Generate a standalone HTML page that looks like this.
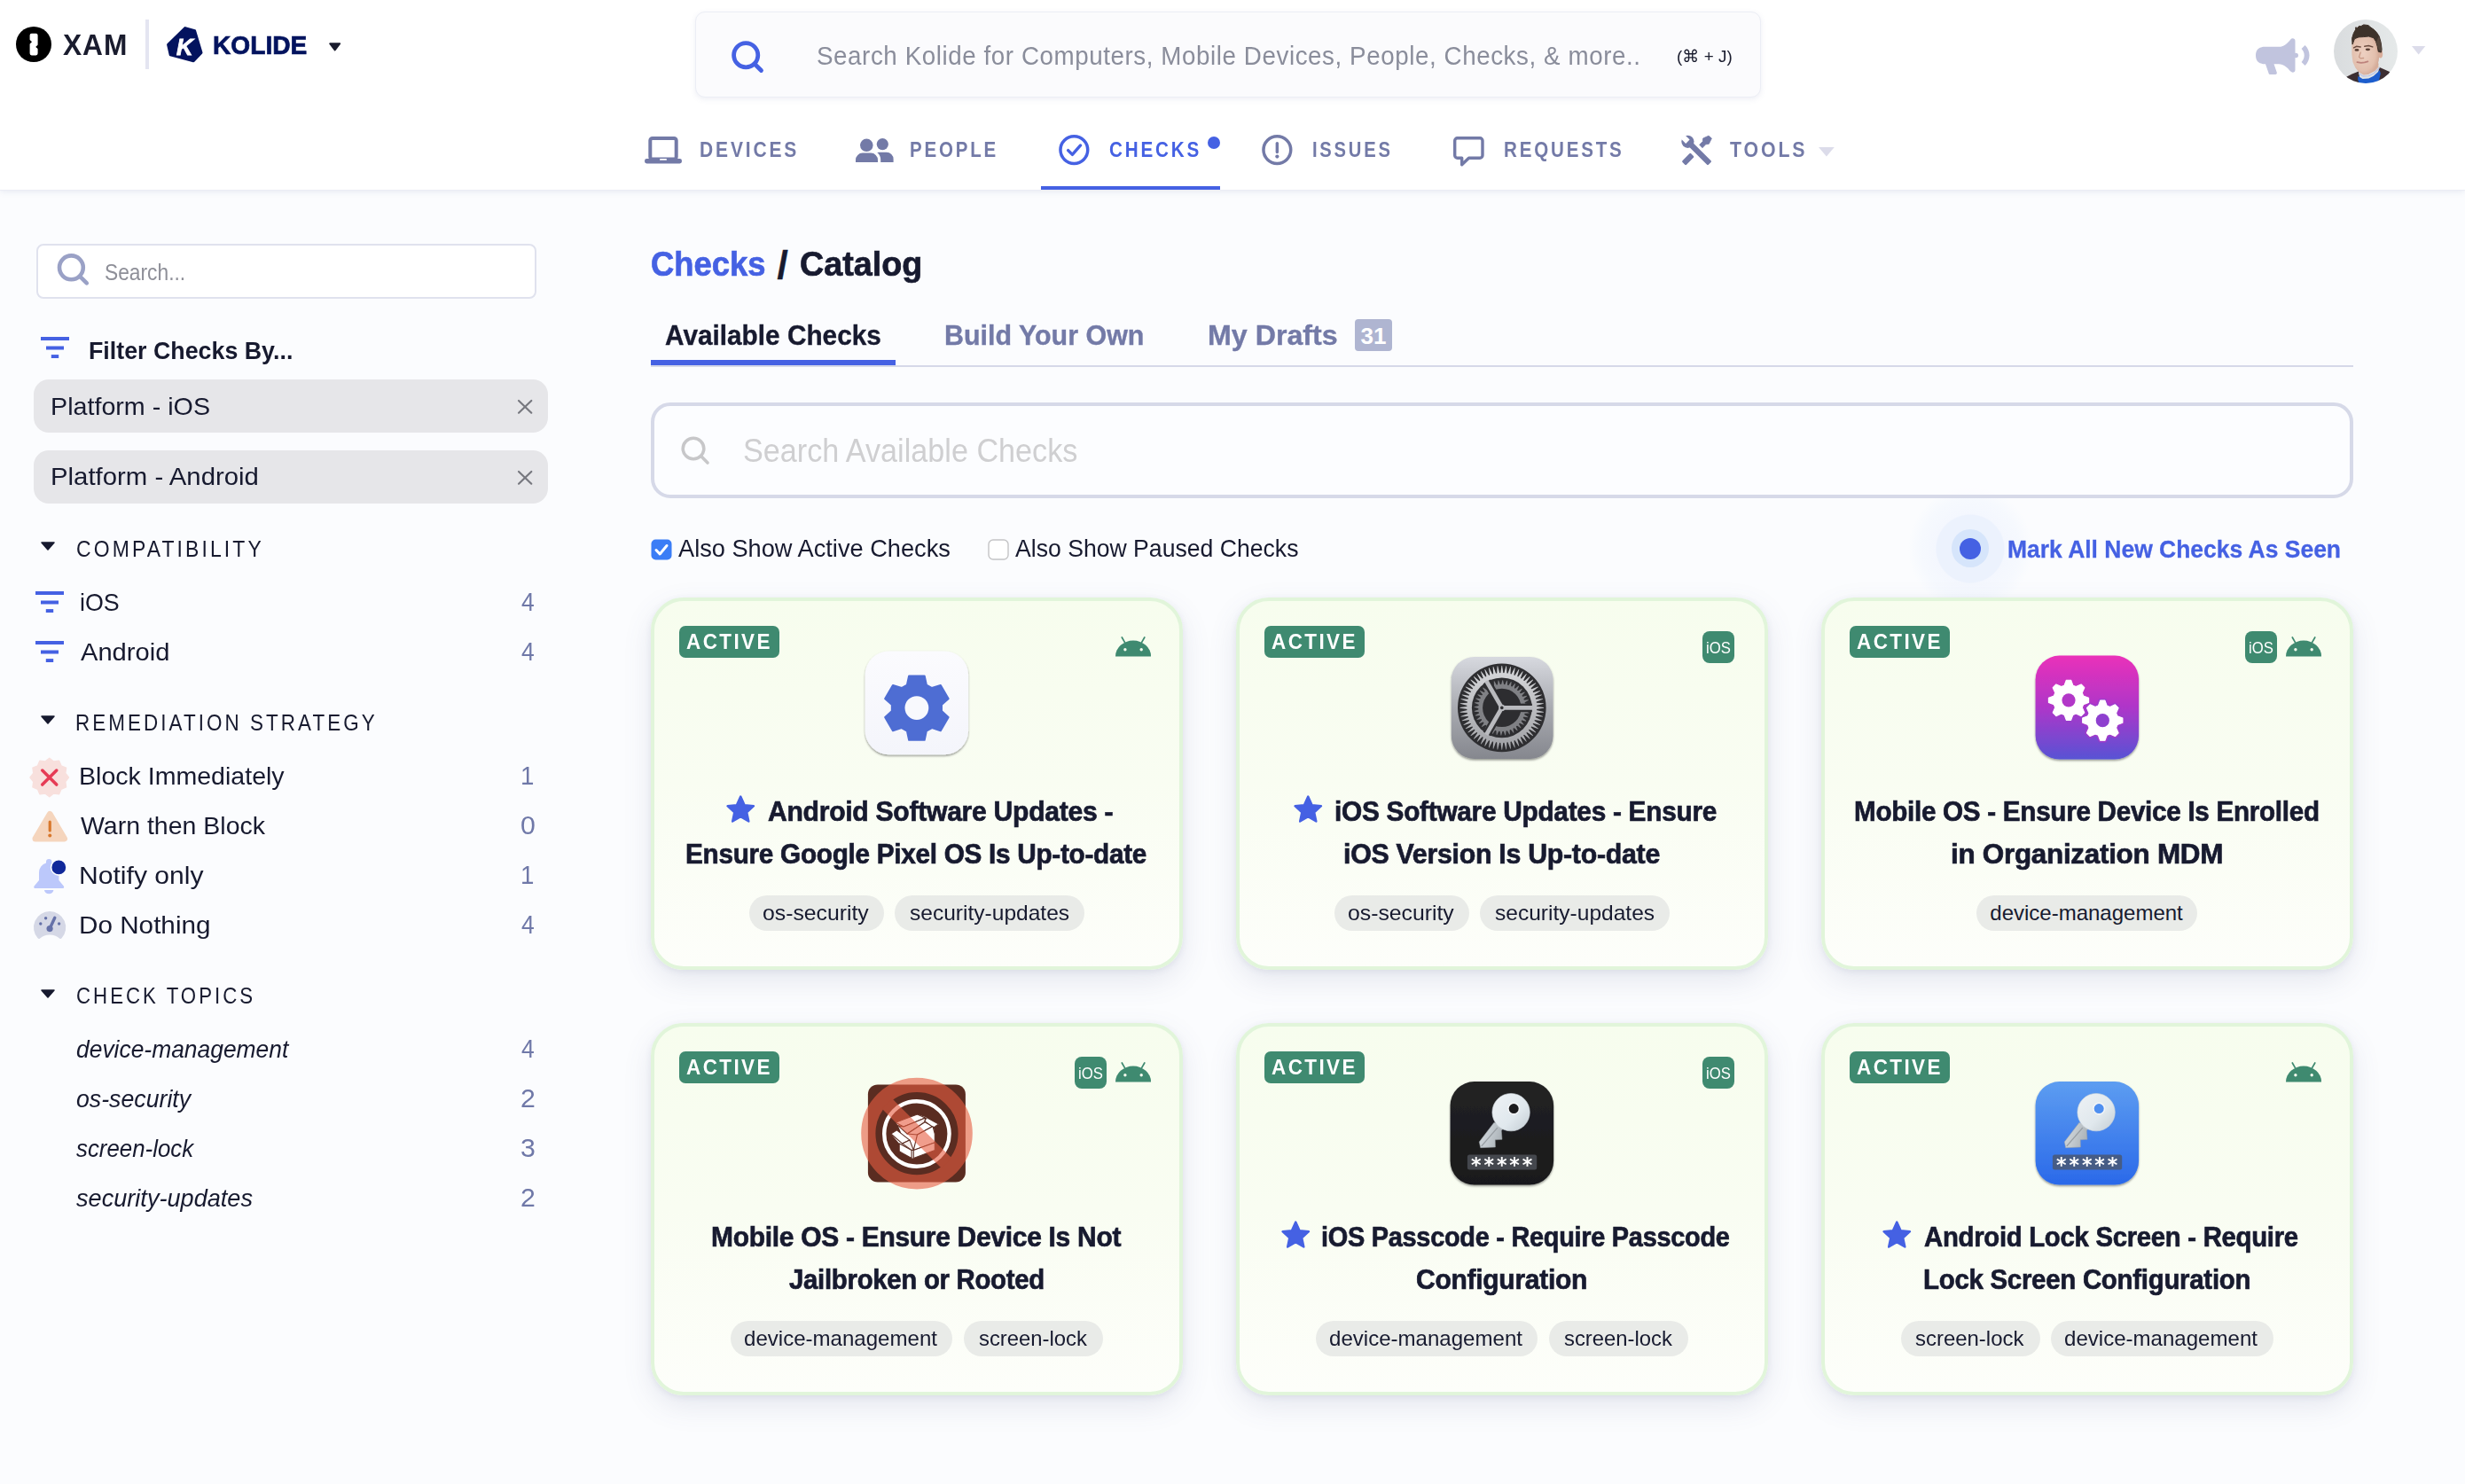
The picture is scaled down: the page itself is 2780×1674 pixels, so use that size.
<!DOCTYPE html>
<html lang="en"><head><meta charset="utf-8"><title>Checks / Catalog</title>
<style>
html,body{margin:0;padding:0}
body{width:2780px;height:1674px;overflow:hidden;background:#fbfcfe;position:relative;font-family:"Liberation Sans",sans-serif}
.t{position:absolute;white-space:nowrap;line-height:1;transform-origin:0 50%}
svg{overflow:visible}
</style></head><body>

<div style="position:absolute;left:0px;top:0px;width:2780px;height:214px;background:#fff;box-shadow:0 1px 0 #ebecf5,0 2px 7px rgba(110,125,170,.15)"></div>
<svg style="position:absolute;left:17.8px;top:29.8px;" width="40" height="40" viewBox="0 0 40 40"><circle cx="20" cy="20" r="20" fill="#000"/><path d="M17.700 7.700h4.800a2.100 2.100 0 0 1 2.100 2.100v10.400a1.300 1.300 0 0 1-.5 1l-1.300 1a.9.900 0 0 0 0 1.400l1.300 1a1.300 1.300 0 0 1 .5 1v4.700a2.100 2.100 0 0 1-2.100 2.100h-4.800a2.100 2.100 0 0 1-2.100-2.100v-10.400a1.300 1.300 0 0 1 .5-1l1.300-1a.9.900 0 0 0 0-1.400l-1.300-1a1.300 1.300 0 0 1-.5-1v-4.700a2.100 2.100 0 0 1 2.100-2.100z" fill="#fff"/></svg>
<div class="t" style="left:70.7px;top:33.51px;font-size:33.3px;font-weight:700;color:#1a1c2e;letter-spacing:1px;transform:scaleX(0.9521);">XAM</div>
<div style="position:absolute;left:164px;top:22px;width:4px;height:56px;background:#e4e5f1"></div>
<svg style="position:absolute;left:187.8px;top:29.8px;" width="41" height="41" viewBox="0 0 41 41"><path d="M20.8 1.600 L31.6 4.600 L39 29.400 L30.200 38.800 L4.200 31.800 L1.600 20.400 Z" fill="#03135e" stroke="#03135e" stroke-width="3" stroke-linejoin="round"/></svg>
<div class="t" style="left:199.0px;top:39.77px;font-size:26.5px;font-weight:700;color:#fff;font-style:italic;transform:scaleX(0.9762);-webkit-text-stroke:0.9px #fff;">K</div>
<div class="t" style="left:240.02970359574593px;top:36.75px;font-size:29px;font-weight:700;color:#03135e;transform:scaleX(0.9703);-webkit-text-stroke:0.7px #03135e;">KOLIDE</div>
<svg style="position:absolute;left:371.4px;top:48.2px;" width="13.4" height="9.6" viewBox="0 0 13.4 9.6"><path d="M1.200 1.200h11l-5.500 7.200z" fill="#1a1c2e" stroke="#1a1c2e" stroke-width="2" stroke-linejoin="round"/></svg>
<div style="position:absolute;left:784px;top:13px;width:1202px;height:97px;background:#fbfbfd;border:1.500px solid #eceef5;border-radius:11px;box-sizing:border-box;box-shadow:0 2px 6px rgba(90,100,160,.10)"></div>
<svg style="position:absolute;left:824.8px;top:46px;" width="36.2" height="36" viewBox="0 0 36.2 36"><circle cx="16.200" cy="16.200" r="13.600" fill="none" stroke="#4561e3" stroke-width="4.800"/><path d="M26.200 26.200l7.300 7.300" stroke="#4561e3" stroke-width="4.800" stroke-linecap="round"/></svg>
<div class="t" style="left:920.543144203863px;top:48.75px;font-size:29px;font-weight:400;color:#8a8d9b;letter-spacing:0.6px;transform:scaleX(0.9569);">Search Kolide for Computers, Mobile Devices, People, Checks, &amp; more..</div>
<div class="t" style="left:1890.583372614858px;top:55.34px;font-size:18.5px;font-weight:400;color:#1a1c2e;transform:scaleX(1.0166);">(&#8984; + J)</div>
<svg style="position:absolute;left:727px;top:153.6px;" width="42" height="30.4" viewBox="0 0 42 30.4"><rect x="6.300" y="2" width="29.400" height="23.500" rx="2.500" fill="none" stroke="#737aa7" stroke-width="4"/><rect x="0" y="25" width="42" height="5.400" rx="2.400" fill="#737aa7"/><rect x="17" y="25" width="8" height="1.800" rx=".9" fill="#fff"/></svg>
<div class="t" style="left:788.6029763387739px;top:157.89px;font-size:23.4px;font-weight:700;color:#737aa7;letter-spacing:3.2px;transform:scaleX(0.8970);">DEVICES</div>
<svg style="position:absolute;left:964.7px;top:155.6px;" width="42.6" height="27" viewBox="0 0 42.6 27"><g fill="#737aa7"><circle cx="12.300" cy="7.800" r="7.300"/><path d="M0 27v-2.600a7.800 7.800 0 0 1 7.800-7.800h9.400a7.800 7.800 0 0 1 7.800 7.800V27z"/><circle cx="30.300" cy="6.600" r="6.600"/><path d="M28.200 27v-2.600a10.800 10.800 0 0 0-3.900-8.300a7.500 7.500 0 0 1 2.400-.4h8.100a7.800 7.800 0 0 1 7.800 7.800V27z"/></g></svg>
<div class="t" style="left:1025.7243159786694px;top:157.89px;font-size:23.4px;font-weight:700;color:#737aa7;letter-spacing:3.2px;transform:scaleX(0.8757);">PEOPLE</div>
<svg style="position:absolute;left:1193.6px;top:151.9px;" width="34.7" height="34.1" viewBox="0 0 34.7 34.1"><circle cx="17.350" cy="17.050" r="15.400" fill="none" stroke="#4561e3" stroke-width="3.500"/><path d="M10.600 17.600l4.800 4.800 9.200-10.400" fill="none" stroke="#4561e3" stroke-width="3.400" stroke-linecap="round" stroke-linejoin="round"/></svg>
<div class="t" style="left:1251.0px;top:157.89px;font-size:23.4px;font-weight:700;color:#4561e3;letter-spacing:3.2px;transform:scaleX(0.8829);">CHECKS</div>
<div style="position:absolute;left:1362px;top:154.4px;width:14px;height:14px;background:#4561e3;border-radius:50%"></div>
<div style="position:absolute;left:1174px;top:210px;width:202px;height:4px;background:#4561e3"></div>
<svg style="position:absolute;left:1422.7px;top:151.9px;" width="34.7" height="34.1" viewBox="0 0 34.7 34.1"><circle cx="17.350" cy="17.050" r="15.400" fill="none" stroke="#737aa7" stroke-width="3.500"/><path d="M17.350 9.600v10" stroke="#737aa7" stroke-width="3.400" stroke-linecap="round"/><circle cx="17.350" cy="24.600" r="2.100" fill="#737aa7"/></svg>
<div class="t" style="left:1480.13668103231px;top:157.89px;font-size:23.4px;font-weight:700;color:#737aa7;letter-spacing:3.2px;transform:scaleX(0.8633);">ISSUES</div>
<svg style="position:absolute;left:1638.5px;top:153.9px;" width="34.7" height="33.7" viewBox="0 0 34.7 33.7"><path d="M4.700 1.700h25.300a3 3 0 0 1 3 3v16.600a3 3 0 0 1-3 3H17.500L9.700 31.800V24.300H4.700a3 3 0 0 1-3-3V4.700a3 3 0 0 1 3-3z" fill="none" stroke="#737aa7" stroke-width="3.400" stroke-linejoin="round"/></svg>
<div class="t" style="left:1695.9208933833052px;top:157.89px;font-size:23.4px;font-weight:700;color:#737aa7;letter-spacing:3.2px;transform:scaleX(0.8791);">REQUESTS</div>
<svg style="position:absolute;left:1896.4px;top:153.3px;" width="34.6" height="33.5" viewBox="0 0 34.6 33.5"><g fill="#737aa7"><circle cx="7.400" cy="6.800" r="7.100"/><rect x="0" y="-3.150" width="35.100" height="6.300" rx="1.200" transform="translate(7.400,6.600) rotate(45)"/><path d="M7.400 6.800L0 -.6" stroke="#fff" stroke-width="6.200"/><rect x="-6.850" y="-3.200" width="13.700" height="6.400" rx="1.300" transform="translate(7.700,26.500) rotate(-45)"/><path d="M31 .14L34.400 3.050 31.300 9.360 27.800 9.850 23.900 13.700 20.660 10.170 24.400 6.600 24.700 3.050z" stroke="#737aa7" stroke-width=".8" stroke-linejoin="round"/></g></svg>
<div class="t" style="left:1951.0px;top:157.89px;font-size:23.4px;font-weight:700;color:#737aa7;letter-spacing:3.2px;transform:scaleX(0.9097);">TOOLS</div>
<svg style="position:absolute;left:2051px;top:165.5px;" width="17.8" height="10.5" viewBox="0 0 17.8 10.5"><path d="M0 0h17.800l-8.900 10.500z" fill="#dcdcea"/></svg>
<svg style="position:absolute;left:2544.1px;top:42.9px;" width="60.6" height="41.1" viewBox="0 0 60.6 41.1"><g fill="#c1c4de"><path d="M8.500 9.800h17.500c5.500 0 9.500-3.600 13.300-8.400 1.600-2 5.200-1.300 5.200 1.600v33c0 2.900-3.600 3.600-5.200 1.600-3.800-4.800-7.800-8.400-13.300-8.400H20.500l3.300 9.600c.4 1.100-.4 2.300-1.600 2.300h-5.800c-.8 0-1.400-.5-1.700-1.200L11 29.200H8.500a4.500 4.500 0 0 1-2.400-.7C2.600 28.100 0 24.400 0 19.500s2.600-8.600 6.100-9c.7-.4 1.500-.7 2.400-.7z"/><circle cx="45.200" cy="19.500" r="2.800"/><path d="M55.600 8c6.600 6.600 6.600 16.400 0 23l-4-4c4.200-4.500 4.200-10.500 0-15z"/></g></svg>
<svg style="position:absolute;left:2632px;top:21.9px;" width="72" height="72" viewBox="0 0 72 72"><defs><clipPath id="av"><circle cx="36" cy="36" r="36"/></clipPath><linearGradient id="avbg" x1="0" y1="0" x2="1" y2="0"><stop offset="0" stop-color="#d9dcde"/><stop offset=".5" stop-color="#e0e3e4"/><stop offset="1" stop-color="#e5e9e9"/></linearGradient><radialGradient id="avsk" cx=".42" cy=".45" r=".65"><stop offset="0" stop-color="#edd0c1"/><stop offset=".7" stop-color="#e2bfad"/><stop offset="1" stop-color="#cfa491"/></radialGradient><filter id="avbl" x="-10%" y="-10%" width="120%" height="120%"><feGaussianBlur stdDeviation=".55"/></filter></defs><g clip-path="url(#av)"><rect width="72" height="72" fill="url(#avbg)"/><g filter="url(#avbl)"><path d="M12.7 65.4 L20.6 61.5 L28.0 58.6 L30.2 73.3 L12.7 73.3Z" fill="#3b2f30"/><path d="M51.2 53.8 L57.4 56.4 L63.6 59.2 L61.9 73.3 L44.9 73.3 L49.5 64.9Z" fill="#3d2f31"/><path d="M28.0 57.5 L33.1 61.7 L39.3 61.5 L46.6 58.1 L50.6 53.5 L49.5 47.9 L28.0 50.7Z" fill="#d9b09d"/><path d="M27.4 63.7 L32.5 67.1 L39.3 66.6 L44.9 63.7 L49.8 59.2 L51.7 56.9 L52.9 60.9 L51.2 67.7 L48.3 73.3 L29.1 73.3 L27.1 67.7Z" fill="#1b5dcd"/><path d="M28.2 60.9 L33.1 64.0 L39.3 63.6 L45.5 60.6 L50.3 55.8 L51.5 54.1" fill="none" stroke="#bcc6e6" stroke-width="1.400" stroke-linejoin="round"/><path d="M28.0 57.5 L33.1 61.7 L39.3 61.5 L46.6 58.1 L50.6 53.5 L49.5 47.9 L28.0 50.7Z" fill="#d6ab98" transform="translate(0,-2.500)"/><ellipse cx="52.6" cy="38.8" rx="2.600" ry="4.800" fill="#d9ae9b"/><path d="M21.2 25.8 L23.4 21.3 L33.6 19.5 L44.9 20.7 L47.8 25.8 L49.8 33.7 L50.6 39.4 L50.0 46.2 L47.8 53.0 L43.8 58.1 L38.7 61.2 L33.6 61.7 L29.1 59.2 L25.1 54.1 L22.3 47.9 L21.1 39.4Z" fill="url(#avsk)" stroke="url(#avsk)" stroke-width="1.500" stroke-linejoin="round"/><path d="M21.1 28.1 L20.6 21.3 L22.3 15.6 L24.8 11.1 L24.6 8.9 L26.8 9.4 L28.5 7.4 L30.8 7.6 L33.6 5.9 L37.0 6.3 L39.3 6.7 L41.0 8.5 L44.9 11.1 L48.3 14.5 L51.2 19.0 L53.1 25.8 L54.1 33.7 L53.4 37.1 L50.3 36.3 L49.2 30.3 L47.5 24.7 L44.9 20.7 L39.3 19.0 L33.6 19.6 L28.0 19.9 L23.4 21.8Z" fill="#3e3129" stroke="#3e3129" stroke-width="1" stroke-linejoin="round"/><path d="M47.8 25.8 L50.6 33.7 L53.4 37.1 L54.0 33.7 L52.9 25.8 L50.6 19.0Z" fill="#55463d"/><path d="M22.6 31.9 L25.7 30.3 L30.2 30.9" fill="none" stroke="#6b4c3f" stroke-width="1.500" stroke-linecap="round"/><path d="M34.8 30.3 L39.3 29.5 L43.8 30.9" fill="none" stroke="#6b4c3f" stroke-width="1.500" stroke-linecap="round"/><ellipse cx="26.0" cy="34.4" rx="2.500" ry="1.300" fill="#5a4036"/><ellipse cx="38.4" cy="33.8" rx="2.700" ry="1.400" fill="#5a4036"/><path d="M30.2 37.1 L28.5 42.2 L30.2 43.9 L33.6 43.5" fill="none" stroke="#c99a87" stroke-width="1.300" stroke-linecap="round" stroke-linejoin="round"/><path d="M26.4 48.2 L30.8 48.9 L34.8 48.4 L38.4 47.3" fill="none" stroke="#bd837c" stroke-width="1.800" stroke-linecap="round" stroke-linejoin="round"/></g></g></svg>
<svg style="position:absolute;left:2720.4px;top:52px;" width="15.3" height="9.4" viewBox="0 0 15.3 9.4"><path d="M0 0h15.300l-7.650 9.400z" fill="#dcdcea"/></svg>
<div style="position:absolute;left:40.8px;top:274.8px;width:564.7px;height:62.3px;background:#fff;border:2px solid #e0e2ee;border-radius:8px;box-sizing:border-box"></div>
<svg style="position:absolute;left:63.6px;top:286px;" width="36.4" height="36" viewBox="0 0 36.4 36"><circle cx="16.400" cy="15.800" r="13.400" fill="none" stroke="#9aa1c6" stroke-width="4.600"/><path d="M26.200 25.800l7.600 7.600" stroke="#9aa1c6" stroke-width="4.600" stroke-linecap="round"/></svg>
<div class="t" style="left:117.82424380369406px;top:293.79px;font-size:26px;font-weight:400;color:#8e8f98;transform:scaleX(0.8758);">Search...</div>
<svg style="position:absolute;left:46px;top:380px;" width="32" height="24" viewBox="0 0 32 24"><g fill="#4561e3"><rect x="0" y="0" width="32" height="4"/><rect x="6" y="10.500" width="20" height="4"/><rect x="11.800" y="20.100" width="8.400" height="3.900"/></g></svg>
<div class="t" style="left:100.34287672919831px;top:381.70px;font-size:28px;font-weight:700;color:#171a2f;transform:scaleX(0.9571);">Filter Checks By...</div>
<div style="position:absolute;left:37.7px;top:428.2px;width:580.3px;height:59.8px;background:#e6e6e9;border-radius:17px"></div>
<div class="t" style="left:56.95183827262164px;top:444.50px;font-size:28px;font-weight:400;color:#171a2f;transform:scaleX(1.0241);">Platform - iOS</div>
<svg style="position:absolute;left:584px;top:451.3px;" width="16.3" height="15.7" viewBox="0 0 16.3 15.7"><path d="M1 1l14.300 13.700M15.300 1L1 14.700" stroke="#77787f" stroke-width="2.200" stroke-linecap="round"/></svg>
<div style="position:absolute;left:37.7px;top:508.2px;width:580.3px;height:59.8px;background:#e6e6e9;border-radius:17px"></div>
<div class="t" style="left:56.9033483144091px;top:524.00px;font-size:28px;font-weight:400;color:#171a2f;transform:scaleX(1.0483);">Platform - Android</div>
<svg style="position:absolute;left:584px;top:531.3px;" width="16.3" height="15.7" viewBox="0 0 16.3 15.7"><path d="M1 1l14.300 13.700M15.300 1L1 14.700" stroke="#77787f" stroke-width="2.200" stroke-linecap="round"/></svg>
<svg style="position:absolute;left:46px;top:611.3px;" width="16" height="9.9" viewBox="0 0 16 9.9"><path d="M1 1h14l-7 7.900z" fill="#171a2f" stroke="#171a2f" stroke-width="1.600" stroke-linejoin="round"/></svg>
<div class="t" style="left:86.08169395979658px;top:607.24px;font-size:25px;font-weight:400;color:#171a2f;letter-spacing:3.4px;transform:scaleX(0.9183);">COMPATIBILITY</div>
<svg style="position:absolute;left:40.3px;top:667px;" width="32" height="24" viewBox="0 0 32 24"><g fill="#4561e3"><rect x="0" y="0" width="32" height="4"/><rect x="6" y="10.500" width="20" height="4"/><rect x="11.800" y="20.100" width="8.400" height="3.900"/></g></svg>
<div class="t" style="left:89.64222222222222px;top:666.30px;font-size:28px;font-weight:400;color:#171a2f;transform:scaleX(0.9578);">iOS</div>
<div class="t" style="left:587.8px;top:665.45px;font-size:29px;font-weight:400;color:#6f78a8;transform:scaleX(0.9125);">4</div>
<svg style="position:absolute;left:40.3px;top:723px;" width="32" height="24" viewBox="0 0 32 24"><g fill="#4561e3"><rect x="0" y="0" width="32" height="4"/><rect x="6" y="10.500" width="20" height="4"/><rect x="11.800" y="20.100" width="8.400" height="3.900"/></g></svg>
<div class="t" style="left:90.6px;top:722.30px;font-size:28px;font-weight:400;color:#171a2f;transform:scaleX(1.0396);">Android</div>
<div class="t" style="left:587.8px;top:721.45px;font-size:29px;font-weight:400;color:#6f78a8;transform:scaleX(0.9125);">4</div>
<svg style="position:absolute;left:46px;top:807.1px;" width="16" height="9.9" viewBox="0 0 16 9.9"><path d="M1 1h14l-7 7.900z" fill="#171a2f" stroke="#171a2f" stroke-width="1.600" stroke-linejoin="round"/></svg>
<div class="t" style="left:85.20464369884478px;top:803.04px;font-size:25px;font-weight:400;color:#171a2f;letter-spacing:3.4px;transform:scaleX(0.8977);">REMEDIATION STRATEGY</div>
<svg style="position:absolute;left:34.2px;top:855.8px;" width="43.5" height="42.1" viewBox="0 0 43.5 42.1"><polygon points="21.75,-0.65 26.56,3.08 32.60,2.26 34.90,7.90 40.54,10.20 39.72,16.24 43.45,21.05 39.72,25.86 40.54,31.90 34.90,34.20 32.60,39.84 26.56,39.02 21.75,42.75 16.94,39.02 10.90,39.84 8.60,34.20 2.96,31.90 3.78,25.86 0.05,21.05 3.78,16.24 2.96,10.20 8.60,7.90 10.90,2.26 16.94,3.08" fill="#f8e0dd" stroke="#f8e0dd" stroke-width="1.500" stroke-linejoin="round"/><path d="M13.750 13.050l16 16M29.750 13.050l-16 16" stroke="#e63b55" stroke-width="3.600" stroke-linecap="round"/></svg>
<div class="t" style="left:89.16079274903508px;top:861.90px;font-size:28px;font-weight:400;color:#171a2f;transform:scaleX(1.0196);">Block Immediately</div>
<div class="t" style="left:586.6923076923077px;top:861.05px;font-size:29px;font-weight:400;color:#6f78a8;transform:scaleX(0.9538);">1</div>
<svg style="position:absolute;left:35.8px;top:914px;" width="40.5" height="36" viewBox="0 0 40.5 36"><path d="M20.250 4.500L36.500 32H4z" fill="#f5d5bd" stroke="#f5d5bd" stroke-width="7" stroke-linejoin="round"/><path d="M20.250 13v10" stroke="#d8782c" stroke-width="3.200" stroke-linecap="round"/><circle cx="20.250" cy="28.600" r="2" fill="#d8782c"/></svg>
<div class="t" style="left:91.2px;top:918.20px;font-size:28px;font-weight:400;color:#171a2f;transform:scaleX(1.0176);">Warn then Block</div>
<div class="t" style="left:586.7571428571429px;top:917.35px;font-size:29px;font-weight:400;color:#6f78a8;transform:scaleX(1.0429);">0</div>
<svg style="position:absolute;left:37.8px;top:968.6px;" width="34.4" height="39.2" viewBox="0 0 34.4 39.2"><g fill="#bcc8fb"><path d="M17.200 0a3.200 3.200 0 0 1 3.200 3.200v1.300a11.300 11.300 0 0 1 8 10.800v8.700l5.400 6.500a1.500 1.500 0 0 1-1.200 2.500H1.800a1.500 1.500 0 0 1-1.200-2.500L6 24v-8.700a11.300 11.300 0 0 1 8-10.800V3.200A3.200 3.200 0 0 1 17.200 0z"/><path d="M12 35h10.400a5.200 4.200 0 0 1-10.400 0z"/></g><circle cx="28.300" cy="9.400" r="8.700" fill="#10289a" stroke="#fbfcfe" stroke-width="1.600"/></svg>
<div class="t" style="left:89.0495425094457px;top:974.00px;font-size:28px;font-weight:400;color:#171a2f;transform:scaleX(1.0752);">Notify only</div>
<div class="t" style="left:586.6923076923077px;top:973.15px;font-size:29px;font-weight:400;color:#6f78a8;transform:scaleX(0.9538);">1</div>
<svg style="position:absolute;left:37.8px;top:1028px;" width="36.2" height="30.6" viewBox="0 0 36.2 30.6"><path d="M18.100 0A18.100 18.100 0 0 1 31.600 30.200a1.800 1.800 0 0 1-2.500.2A17 17 0 0 0 18.100 26.500 17 17 0 0 0 7.100 30.400a1.800 1.800 0 0 1-2.500-.2A18.100 18.100 0 0 1 18.100 0z" fill="#d5d8e6"/><path d="M18.100 19.500L23.800 7.200" stroke="#6571a8" stroke-width="3.400" stroke-linecap="round"/><circle cx="18.100" cy="19.600" r="3.600" fill="#6571a8"/><g fill="#6571a8"><circle cx="7.800" cy="14" r="1.700"/><circle cx="13.600" cy="7.800" r="1.700"/><circle cx="28.600" cy="14" r="1.700"/></g></svg>
<div class="t" style="left:89.0800051507304px;top:1029.80px;font-size:28px;font-weight:400;color:#171a2f;transform:scaleX(1.0600);">Do Nothing</div>
<div class="t" style="left:587.8px;top:1028.95px;font-size:29px;font-weight:400;color:#6f78a8;transform:scaleX(0.9125);">4</div>
<svg style="position:absolute;left:46px;top:1115.5px;" width="16" height="9.9" viewBox="0 0 16 9.9"><path d="M1 1h14l-7 7.900z" fill="#171a2f" stroke="#171a2f" stroke-width="1.600" stroke-linejoin="round"/></svg>
<div class="t" style="left:86.11130214456512px;top:1111.44px;font-size:25px;font-weight:400;color:#171a2f;letter-spacing:3.4px;transform:scaleX(0.8887);">CHECK TOPICS</div>
<div class="t" style="left:86.0px;top:1170.30px;font-size:28px;font-weight:400;color:#171a2f;font-style:italic;transform:scaleX(0.9434);">device-management</div>
<div class="t" style="left:587.8px;top:1169.45px;font-size:29px;font-weight:400;color:#6f78a8;transform:scaleX(0.9125);">4</div>
<div class="t" style="left:86.0px;top:1226.30px;font-size:28px;font-weight:400;color:#171a2f;font-style:italic;transform:scaleX(0.9537);">os-security</div>
<div class="t" style="left:586.7571428571429px;top:1225.45px;font-size:29px;font-weight:400;color:#6f78a8;transform:scaleX(1.0429);">2</div>
<div class="t" style="left:86.0px;top:1282.30px;font-size:28px;font-weight:400;color:#171a2f;font-style:italic;transform:scaleX(0.9231);">screen-lock</div>
<div class="t" style="left:586.7571428571429px;top:1281.45px;font-size:29px;font-weight:400;color:#6f78a8;transform:scaleX(1.0429);">3</div>
<div class="t" style="left:86.0px;top:1338.30px;font-size:28px;font-weight:400;color:#171a2f;font-style:italic;transform:scaleX(0.9687);">security-updates</div>
<div class="t" style="left:586.7571428571429px;top:1337.45px;font-size:29px;font-weight:400;color:#6f78a8;transform:scaleX(1.0429);">2</div>
<div class="t" style="left:734.0675421189699px;top:277.59px;font-size:39px;font-weight:700;color:#4561e3;transform:scaleX(0.9325);-webkit-text-stroke:0.7px #4561e3;">Checks</div>
<div class="t" style="left:876.5px;top:276.55px;font-size:44px;font-weight:700;color:#171a2f;-webkit-text-stroke:0.5px #171a2f;">/</div>
<div class="t" style="left:902.3334541933551px;top:277.59px;font-size:39px;font-weight:700;color:#171a2f;transform:scaleX(0.9665);-webkit-text-stroke:0.7px #171a2f;">Catalog</div>
<div class="t" style="left:750.0px;top:362.76px;font-size:31px;font-weight:700;color:#171a2f;transform:scaleX(0.9603);-webkit-text-stroke:0.35px #171a2f;">Available Checks</div>
<div style="position:absolute;left:734px;top:412px;width:1920px;height:2px;background:#d5d8e8"></div>
<div style="position:absolute;left:734px;top:406px;width:276px;height:6.2px;background:#4561e3"></div>
<div class="t" style="left:1064.936506776908px;top:362.76px;font-size:31px;font-weight:700;color:#737aa7;transform:scaleX(0.9817);-webkit-text-stroke:0.35px #737aa7;">Build Your Own</div>
<div class="t" style="left:1361.6234161787338px;top:362.76px;font-size:31px;font-weight:700;color:#737aa7;transform:scaleX(1.0383);-webkit-text-stroke:0.35px #737aa7;">My Drafts</div>
<div style="position:absolute;left:1527.6px;top:360px;width:42.2px;height:35.8px;background:#afb5d1;border-radius:4px"></div>
<div class="t" style="left:1534.5px;top:365.59px;font-size:26px;font-weight:700;color:#fff;">31</div>
<div style="position:absolute;left:2152px;top:548.5px;width:140px;height:140px;border-radius:50%;background:radial-gradient(circle closest-side,#ecf2fd 0,#ecf2fd 54%,#f4f7fe 56%,#f6f9fe 80%,rgba(249,251,254,.6) 96%,rgba(251,252,254,0) 100%)"></div>
<div style="position:absolute;left:734px;top:454px;width:1920px;height:108px;border:4px solid #d6d9e8;border-radius:22px;box-sizing:border-box;background:rgba(253,253,255,.6)"></div>
<svg style="position:absolute;left:768px;top:492px;" width="32" height="32" viewBox="0 0 32 32"><circle cx="14" cy="14" r="11.800" fill="none" stroke="#c7c7c9" stroke-width="3.600"/><path d="M22.600 22.600l7.400 7.400" stroke="#c7c7c9" stroke-width="3.600" stroke-linecap="round"/></svg>
<div class="t" style="left:837.7509388541166px;top:491.03px;font-size:36px;font-weight:400;color:#cfcfd1;transform:scaleX(0.9491);">Search Available Checks</div>
<svg style="position:absolute;left:734px;top:608px;" width="24" height="24" viewBox="0 0 24 24"><rect x=".5" y=".5" width="23" height="23" rx="5" fill="#3b7df6"/><path d="M6 12.500l4.200 4.500L18 7.500" fill="none" stroke="#fff" stroke-width="3" stroke-linecap="round" stroke-linejoin="round"/></svg>
<div class="t" style="left:765.0px;top:605.30px;font-size:28px;font-weight:400;color:#171a2f;transform:scaleX(0.9714);">Also Show Active Checks</div>
<svg style="position:absolute;left:1113.8px;top:608px;" width="24" height="24" viewBox="0 0 24 24"><rect x="1" y="1" width="22" height="22" rx="5" fill="#fff" stroke="#c4c4c6" stroke-width="1.400"/></svg>
<div class="t" style="left:1145.0px;top:605.30px;font-size:28px;font-weight:400;color:#171a2f;transform:scaleX(0.9502);">Also Show Paused Checks</div>
<div style="position:absolute;left:2200.6px;top:597.1px;width:42.8px;height:42.8px;border-radius:50%;background:#d6e5fb"></div>
<div style="position:absolute;left:2210px;top:606.5px;width:24px;height:24px;border-radius:50%;background:#4561e3"></div>
<div class="t" style="left:2264.0548960695946px;top:605.90px;font-size:28px;font-weight:700;color:#4561e3;transform:scaleX(0.9451);-webkit-text-stroke:0.3px #4561e3;">Mark All New Checks As Seen</div>
<div style="position:absolute;left:734px;top:674px;width:600px;height:420px;box-sizing:border-box;border:4px solid #e1f5da;border-radius:37px;background:linear-gradient(180deg,#f7fdee 0%,#f9fdf2 50%,#fdfefa 100%);box-shadow:0 2px 7px rgba(85,95,140,.10),0 12px 32px rgba(85,95,140,.13)"></div>
<div style="position:absolute;left:766px;top:706px;width:113px;height:36px;background:#3f8a70;border-radius:7px"></div>
<div class="t" style="left:773.8px;top:711.98px;font-size:24px;font-weight:700;color:#fff;letter-spacing:2.6px;transform:scaleX(0.9347);">ACTIVE</div>
<svg style="position:absolute;left:1257.8px;top:717.6px;" width="40.1" height="22.4" viewBox="0 0 40.1 22.4"><path d="M0 22.400a20.050 17.800 0 0 1 40.100 0z" fill="#3f8a70"/><path d="M10.800 7.200L7.300 1M29.300 7.200L32.800 1" stroke="#3f8a70" stroke-width="1.700" stroke-linecap="round"/><circle cx="10.900" cy="14.700" r="1.700" fill="#f8fdf0"/><circle cx="29.200" cy="14.700" r="1.700" fill="#f8fdf0"/></svg>
<svg style="position:absolute;left:975.0px;top:734.5px;" width="118" height="123" viewBox="0 0 118 123"><defs><filter id="ash" x="-20%" y="-20%" width="140%" height="150%"><feDropShadow dx="0" dy="1.500" stdDeviation="1.300" flood-color="#000" flood-opacity=".42"/></filter></defs><defs><linearGradient id="asg" x1="0" y1="0" x2="0" y2="1"><stop offset="0" stop-color="#fbfbfe"/><stop offset="1" stop-color="#f4f5fb"/></linearGradient></defs><rect x=".600" y="-.600" width="116.500" height="116.800" rx="27" fill="url(#asg)" filter="url(#ash)"/><path d="M69.78 89.62 L67.61 99.66 L50.19 99.66 L48.02 89.62 L41.81 86.03 L32.02 89.18 L23.31 74.09 L30.93 67.19 L30.93 60.01 L23.31 53.11 L32.02 38.02 L41.81 41.17 L48.02 37.58 L50.19 27.54 L67.61 27.54 L69.78 37.58 L75.99 41.17 L85.78 38.02 L94.49 53.11 L86.87 60.01 L86.87 67.19 L94.49 74.09 L85.78 89.18 L75.99 86.03Z" fill="#4e6dd3" stroke="#4e6dd3" stroke-width="2.200" stroke-linejoin="round"/><circle cx="58.900" cy="63.600" r="13.400" fill="#f8f9fd"/></svg>
<svg style="position:absolute;left:818.5px;top:897px;" width="32.5" height="31" viewBox="0 0 32.5 31"><polygon points="16.25,1.50 20.54,11.09 30.99,12.21 23.19,19.26 25.36,29.54 16.25,24.30 7.14,29.54 9.31,19.26 1.51,12.21 11.96,11.09" fill="#4561e3" stroke="#4561e3" stroke-width="2.400" stroke-linejoin="round"/></svg>
<div class="t" style="left:866.0px;top:898.51px;font-size:32px;font-weight:700;color:#171a2f;letter-spacing:-0.3px;transform:scaleX(0.9414);-webkit-text-stroke:0.7px #171a2f;">Android Software Updates -</div>
<div class="t" style="left:773.3423188182065px;top:946.71px;font-size:32px;font-weight:700;color:#171a2f;letter-spacing:-0.3px;transform:scaleX(0.9288);-webkit-text-stroke:0.7px #171a2f;">Ensure Google Pixel OS Is Up-to-date</div>
<div style="position:absolute;left:845px;top:1010px;width:151.5px;height:40px;background:#e9ebe8;border-radius:20px"></div>
<div class="t" style="left:860.2680714504023px;top:1018.08px;font-size:24px;font-weight:400;color:#171a2f;transform:scaleX(1.0319);">os-security</div>
<div style="position:absolute;left:1009.2px;top:1010px;width:213.5px;height:40px;background:#e9ebe8;border-radius:20px"></div>
<div class="t" style="left:1025.6px;top:1018.08px;font-size:24px;font-weight:400;color:#171a2f;transform:scaleX(1.0228);">security-updates</div>
<div style="position:absolute;left:1394px;top:674px;width:600px;height:420px;box-sizing:border-box;border:4px solid #e1f5da;border-radius:37px;background:linear-gradient(180deg,#f7fdee 0%,#f9fdf2 50%,#fdfefa 100%);box-shadow:0 2px 7px rgba(85,95,140,.10),0 12px 32px rgba(85,95,140,.13)"></div>
<div style="position:absolute;left:1426px;top:706px;width:113px;height:36px;background:#3f8a70;border-radius:7px"></div>
<div class="t" style="left:1433.8px;top:711.98px;font-size:24px;font-weight:700;color:#fff;letter-spacing:2.6px;transform:scaleX(0.9347);">ACTIVE</div>
<div style="position:absolute;left:1920.3px;top:712.1px;width:36px;height:36px;background:#3f8a70;border-radius:8px"></div>
<div class="t" style="left:1924.153724604966px;top:722.72px;font-size:17.7px;font-weight:400;color:#fff;transform:scaleX(0.9463);">iOS</div>
<svg style="position:absolute;left:1635.0px;top:734.5px;" width="118" height="123" viewBox="0 0 118 123"><defs><linearGradient id="isg" x1="0" y1="0" x2="0" y2="1"><stop offset="0" stop-color="#d7d9df"/><stop offset=".5" stop-color="#a9abb1"/><stop offset="1" stop-color="#85878e"/></linearGradient><linearGradient id="isr" x1="0" y1="0" x2="0" y2="1"><stop offset="0" stop-color="#d4d5d8"/><stop offset="1" stop-color="#a4a5a9"/></linearGradient></defs><rect x="1.800" y="6" width="114.800" height="115" rx="26" fill="url(#isg)" filter="url(#ash)"/><circle cx="58.8" cy="63.4" r="49.800" fill="#2e2e31"/><path d="M97.77 61.84 L106.10 63.12 L106.10 63.68 L97.77 64.96 L97.72 65.92 L105.87 68.06 L105.81 68.63 L97.39 69.02 L97.24 69.98 L105.12 72.96 L105.01 73.51 L96.59 73.03 L96.34 73.96 L103.87 77.75 L103.70 78.29 L95.38 76.93 L95.03 77.83 L102.13 82.38 L101.89 82.90 L93.77 80.67 L93.33 81.53 L99.90 86.80 L99.62 87.30 L91.77 84.24 L91.24 85.04 L97.23 90.97 L96.90 91.43 L89.41 87.57 L88.80 88.32 L94.14 94.84 L93.76 95.26 L86.72 90.63 L86.03 91.32 L90.66 98.36 L90.24 98.74 L83.72 93.40 L82.97 94.01 L86.83 101.50 L86.37 101.83 L80.44 95.84 L79.64 96.37 L82.70 104.22 L82.20 104.50 L76.93 97.93 L76.07 98.37 L78.30 106.49 L77.78 106.73 L73.23 99.63 L72.33 99.98 L73.69 108.30 L73.15 108.47 L69.36 100.94 L68.43 101.19 L68.91 109.61 L68.36 109.72 L65.38 101.84 L64.42 101.99 L64.03 110.41 L63.46 110.47 L61.32 102.32 L60.36 102.37 L59.08 110.70 L58.52 110.70 L57.24 102.37 L56.28 102.32 L54.14 110.47 L53.57 110.41 L53.18 101.99 L52.22 101.84 L49.24 109.72 L48.69 109.61 L49.17 101.19 L48.24 100.94 L44.45 108.47 L43.91 108.30 L45.27 99.98 L44.37 99.63 L39.82 106.73 L39.30 106.49 L41.53 98.37 L40.67 97.93 L35.40 104.50 L34.90 104.22 L37.96 96.37 L37.16 95.84 L31.23 101.83 L30.77 101.50 L34.63 94.01 L33.88 93.40 L27.36 98.74 L26.94 98.36 L31.57 91.32 L30.88 90.63 L23.84 95.26 L23.46 94.84 L28.80 88.32 L28.19 87.57 L20.70 91.43 L20.37 90.97 L26.36 85.04 L25.83 84.24 L17.98 87.30 L17.70 86.80 L24.27 81.53 L23.83 80.67 L15.71 82.90 L15.47 82.38 L22.57 77.83 L22.22 76.93 L13.90 78.29 L13.73 77.75 L21.26 73.96 L21.01 73.03 L12.59 73.51 L12.48 72.96 L20.36 69.98 L20.21 69.02 L11.79 68.63 L11.73 68.06 L19.88 65.92 L19.83 64.96 L11.50 63.68 L11.50 63.12 L19.83 61.84 L19.88 60.88 L11.73 58.74 L11.79 58.17 L20.21 57.78 L20.36 56.82 L12.48 53.84 L12.59 53.29 L21.01 53.77 L21.26 52.84 L13.73 49.05 L13.90 48.51 L22.22 49.87 L22.57 48.97 L15.47 44.42 L15.71 43.90 L23.83 46.13 L24.27 45.27 L17.70 40.00 L17.98 39.50 L25.83 42.56 L26.36 41.76 L20.37 35.83 L20.70 35.37 L28.19 39.23 L28.80 38.48 L23.46 31.96 L23.84 31.54 L30.88 36.17 L31.57 35.48 L26.94 28.44 L27.36 28.06 L33.88 33.40 L34.63 32.79 L30.77 25.30 L31.23 24.97 L37.16 30.96 L37.96 30.43 L34.90 22.58 L35.40 22.30 L40.67 28.87 L41.53 28.43 L39.30 20.31 L39.82 20.07 L44.37 27.17 L45.27 26.82 L43.91 18.50 L44.45 18.33 L48.24 25.86 L49.17 25.61 L48.69 17.19 L49.24 17.08 L52.22 24.96 L53.18 24.81 L53.57 16.39 L54.14 16.33 L56.28 24.48 L57.24 24.43 L58.52 16.10 L59.08 16.10 L60.36 24.43 L61.32 24.48 L63.46 16.33 L64.03 16.39 L64.42 24.81 L65.38 24.96 L68.36 17.08 L68.91 17.19 L68.43 25.61 L69.36 25.86 L73.15 18.33 L73.69 18.50 L72.33 26.82 L73.23 27.17 L77.78 20.07 L78.30 20.31 L76.07 28.43 L76.93 28.87 L82.20 22.30 L82.70 22.58 L79.64 30.43 L80.44 30.96 L86.37 24.97 L86.83 25.30 L82.97 32.79 L83.72 33.40 L90.24 28.06 L90.66 28.44 L86.03 35.48 L86.72 36.17 L93.76 31.54 L94.14 31.96 L88.80 38.48 L89.41 39.23 L96.90 35.37 L97.23 35.83 L91.24 41.76 L91.77 42.56 L99.62 39.50 L99.90 40.00 L93.33 45.27 L93.77 46.13 L101.89 43.90 L102.13 44.42 L95.03 48.97 L95.38 49.87 L103.70 48.51 L103.87 49.05 L96.34 52.84 L96.59 53.77 L105.01 53.29 L105.12 53.84 L97.24 56.82 L97.39 57.78 L105.81 58.17 L105.87 58.74 L97.72 60.88Z" fill="url(#isr)"/><circle cx="58.8" cy="63.4" r="39.500" fill="url(#isr)"/><circle cx="58.8" cy="63.4" r="33.900" fill="#2e2e31"/><path d="M84.79 62.62 L89.99 64.02 L89.98 64.65 L84.69 65.74 L84.59 66.70 L89.51 68.90 L89.40 69.51 L84.01 69.76 L83.76 70.69 L88.27 73.63 L88.06 74.22 L82.71 73.62 L82.31 74.50 L86.31 78.12 L86.01 78.66 L80.81 77.24 L80.28 78.04 L83.67 82.24 L83.29 82.73 L78.38 80.51 L77.73 81.23 L80.42 85.90 L79.96 86.33 L75.46 83.36 L74.71 83.97 L76.63 89.00 L76.11 89.35 L72.13 85.72 L71.29 86.20 L72.41 91.48 L71.84 91.74 L68.47 87.53 L67.57 87.88 L67.85 93.26 L67.25 93.43 L64.58 88.75 L63.64 88.95 L63.06 94.31 L62.44 94.39 L60.54 89.34 L59.58 89.39 L58.18 94.59 L57.55 94.58 L56.46 89.29 L55.50 89.19 L53.30 94.11 L52.69 94.00 L52.44 88.61 L51.51 88.36 L48.57 92.87 L47.98 92.66 L48.58 87.31 L47.70 86.91 L44.08 90.91 L43.54 90.61 L44.96 85.41 L44.16 84.88 L39.96 88.27 L39.47 87.89 L41.69 82.98 L40.97 82.33 L36.30 85.02 L35.87 84.56 L38.84 80.06 L38.23 79.31 L33.20 81.23 L32.85 80.71 L36.48 76.73 L36.00 75.89 L30.72 77.01 L30.46 76.44 L34.67 73.07 L34.32 72.17 L28.94 72.45 L28.77 71.85 L33.45 69.18 L33.25 68.24 L27.89 67.66 L27.81 67.04 L32.86 65.14 L32.81 64.18 L27.61 62.78 L27.62 62.15 L32.91 61.06 L33.01 60.10 L28.09 57.90 L28.20 57.29 L33.59 57.04 L33.84 56.11 L29.33 53.17 L29.54 52.58 L34.89 53.18 L35.29 52.30 L31.29 48.68 L31.59 48.14 L36.79 49.56 L37.32 48.76 L33.93 44.56 L34.31 44.07 L39.22 46.29 L39.87 45.57 L37.18 40.90 L37.64 40.47 L42.14 43.44 L42.89 42.83 L40.97 37.80 L41.49 37.45 L45.47 41.08 L46.31 40.60 L45.19 35.32 L45.76 35.06 L49.13 39.27 L50.03 38.92 L49.75 33.54 L50.35 33.37 L53.02 38.05 L53.96 37.85 L54.54 32.49 L55.16 32.41 L57.06 37.46 L58.02 37.41 L59.42 32.21 L60.05 32.22 L61.14 37.51 L62.10 37.61 L64.30 32.69 L64.91 32.80 L65.16 38.19 L66.09 38.44 L69.03 33.93 L69.62 34.14 L69.02 39.49 L69.90 39.89 L73.52 35.89 L74.06 36.19 L72.64 41.39 L73.44 41.92 L77.64 38.53 L78.13 38.91 L75.91 43.82 L76.63 44.47 L81.30 41.78 L81.73 42.24 L78.76 46.74 L79.37 47.49 L84.40 45.57 L84.75 46.09 L81.12 50.07 L81.60 50.91 L86.88 49.79 L87.14 50.36 L82.93 53.73 L83.28 54.63 L88.66 54.35 L88.83 54.95 L84.15 57.62 L84.35 58.56 L89.71 59.14 L89.79 59.76 L84.74 61.66Z" fill="#808185"/><circle cx="58.8" cy="63.4" r="26.500" fill="#808185"/><circle cx="58.8" cy="63.4" r="21.700" fill="#2d2d30"/><g stroke="#2e2e31" stroke-width="9.500"><path d="M66.8 63.4H92.8"/><path d="M54.80 56.47L41.80 33.96"/><path d="M54.80 70.33L41.80 92.84"/></g><g stroke="#b9babe" stroke-width="4.800"><path d="M58.8 63.4H93.8"/><path d="M58.8 63.4L41.30 33.09"/><path d="M58.8 63.4L41.30 93.71"/></g><circle cx="58.8" cy="63.4" r="3.600" fill="#b9babe"/><circle cx="58.8" cy="63.4" r="1.800" fill="#2d2d30"/></svg>
<svg style="position:absolute;left:1458.8px;top:897px;" width="32.5" height="31" viewBox="0 0 32.5 31"><polygon points="16.25,1.50 20.54,11.09 30.99,12.21 23.19,19.26 25.36,29.54 16.25,24.30 7.14,29.54 9.31,19.26 1.51,12.21 11.96,11.09" fill="#4561e3" stroke="#4561e3" stroke-width="2.400" stroke-linejoin="round"/></svg>
<div class="t" style="left:1504.8361769742992px;top:898.51px;font-size:32px;font-weight:700;color:#171a2f;letter-spacing:-0.3px;transform:scaleX(0.9319);-webkit-text-stroke:0.7px #171a2f;">iOS Software Updates - Ensure</div>
<div class="t" style="left:1514.5040774742295px;top:946.71px;font-size:32px;font-weight:700;color:#171a2f;letter-spacing:-0.3px;transform:scaleX(0.9480);-webkit-text-stroke:0.7px #171a2f;">iOS Version Is Up-to-date</div>
<div style="position:absolute;left:1505px;top:1010px;width:151.5px;height:40px;background:#e9ebe8;border-radius:20px"></div>
<div class="t" style="left:1520.2680714504024px;top:1018.08px;font-size:24px;font-weight:400;color:#171a2f;transform:scaleX(1.0319);">os-security</div>
<div style="position:absolute;left:1669.2px;top:1010px;width:213.5px;height:40px;background:#e9ebe8;border-radius:20px"></div>
<div class="t" style="left:1685.6px;top:1018.08px;font-size:24px;font-weight:400;color:#171a2f;transform:scaleX(1.0228);">security-updates</div>
<div style="position:absolute;left:2054px;top:674px;width:600px;height:420px;box-sizing:border-box;border:4px solid #e1f5da;border-radius:37px;background:linear-gradient(180deg,#f7fdee 0%,#f9fdf2 50%,#fdfefa 100%);box-shadow:0 2px 7px rgba(85,95,140,.10),0 12px 32px rgba(85,95,140,.13)"></div>
<div style="position:absolute;left:2086px;top:706px;width:113px;height:36px;background:#3f8a70;border-radius:7px"></div>
<div class="t" style="left:2093.8px;top:711.98px;font-size:24px;font-weight:700;color:#fff;letter-spacing:2.6px;transform:scaleX(0.9347);">ACTIVE</div>
<div style="position:absolute;left:2531.8px;top:712.1px;width:36px;height:36px;background:#3f8a70;border-radius:8px"></div>
<div class="t" style="left:2535.6537246049666px;top:722.72px;font-size:17.7px;font-weight:400;color:#fff;transform:scaleX(0.9463);">iOS</div>
<svg style="position:absolute;left:2577.8px;top:717.6px;" width="40.1" height="22.4" viewBox="0 0 40.1 22.4"><path d="M0 22.400a20.050 17.800 0 0 1 40.100 0z" fill="#3f8a70"/><path d="M10.800 7.200L7.300 1M29.300 7.200L32.800 1" stroke="#3f8a70" stroke-width="1.700" stroke-linecap="round"/><circle cx="10.900" cy="14.700" r="1.700" fill="#f8fdf0"/><circle cx="29.200" cy="14.700" r="1.700" fill="#f8fdf0"/></svg>
<svg style="position:absolute;left:2295.0px;top:734.5px;" width="118" height="123" viewBox="0 0 118 123"><defs><linearGradient id="mdg" x1="0" y1="0" x2="0" y2="1"><stop offset="0" stop-color="#ea31b9"/><stop offset=".5" stop-color="#ae36c9"/><stop offset="1" stop-color="#5853d4"/></linearGradient></defs><rect x=".600" y="4.600" width="116.500" height="117" rx="27" fill="url(#mdg)" filter="url(#ash)"/><path d="M42.86 71.40 L40.60 77.35 L35.40 77.35 L33.14 71.40 L29.70 69.98 L23.90 72.59 L20.21 68.90 L22.82 63.10 L21.40 59.66 L15.45 57.40 L15.45 52.20 L21.40 49.94 L22.82 46.50 L20.21 40.70 L23.90 37.01 L29.70 39.62 L33.14 38.20 L35.40 32.25 L40.60 32.25 L42.86 38.20 L46.30 39.62 L52.10 37.01 L55.79 40.70 L53.18 46.50 L54.60 49.94 L60.55 52.20 L60.55 57.40 L54.60 59.66 L53.18 63.10 L55.79 68.90 L52.10 72.59 L46.30 69.98Z" fill="#fff" stroke="#fff" stroke-width="1.200" stroke-linejoin="round"/><circle cx="38" cy="54.800" r="7.600" fill="#b237c8"/><path d="M81.16 94.30 L78.90 100.25 L73.70 100.25 L71.44 94.30 L68.00 92.88 L62.20 95.49 L58.51 91.80 L61.12 86.00 L59.70 82.56 L53.75 80.30 L53.75 75.10 L59.70 72.84 L61.12 69.40 L58.51 63.60 L62.20 59.91 L68.00 62.52 L71.44 61.10 L73.70 55.15 L78.90 55.15 L81.16 61.10 L84.60 62.52 L90.40 59.91 L94.09 63.60 L91.48 69.40 L92.90 72.84 L98.85 75.10 L98.85 80.30 L92.90 82.56 L91.48 86.00 L94.09 91.80 L90.40 95.49 L84.60 92.88Z" fill="#fff" stroke="#a03bcc" stroke-width="4.400" stroke-linejoin="round" paint-order="stroke"/><path d="M81.16 94.30 L78.90 100.25 L73.70 100.25 L71.44 94.30 L68.00 92.88 L62.20 95.49 L58.51 91.80 L61.12 86.00 L59.70 82.56 L53.75 80.30 L53.75 75.10 L59.70 72.84 L61.12 69.40 L58.51 63.60 L62.20 59.91 L68.00 62.52 L71.44 61.10 L73.70 55.15 L78.90 55.15 L81.16 61.10 L84.60 62.52 L90.40 59.91 L94.09 63.60 L91.48 69.40 L92.90 72.84 L98.85 75.10 L98.85 80.30 L92.90 82.56 L91.48 86.00 L94.09 91.80 L90.40 95.49 L84.60 92.88Z" fill="#fff" stroke="#fff" stroke-width="1.200" stroke-linejoin="round"/><circle cx="76.300" cy="77.700" r="7.600" fill="#8e40cf"/></svg>
<div class="t" style="left:2091.14830279289px;top:898.51px;font-size:32px;font-weight:700;color:#171a2f;letter-spacing:-0.3px;transform:scaleX(0.9258);-webkit-text-stroke:0.7px #171a2f;">Mobile OS - Ensure Device Is Enrolled</div>
<div class="t" style="left:2199.934592560097px;top:946.71px;font-size:32px;font-weight:700;color:#171a2f;letter-spacing:-0.3px;transform:scaleX(0.9827);-webkit-text-stroke:0.7px #171a2f;">in Organization MDM</div>
<div style="position:absolute;left:2229.2px;top:1010px;width:249.20000000000027px;height:40px;background:#e9ebe8;border-radius:20px"></div>
<div class="t" style="left:2244.300392814026px;top:1018.08px;font-size:24px;font-weight:400;color:#171a2f;">device-management</div>
<div style="position:absolute;left:734px;top:1154px;width:600px;height:420px;box-sizing:border-box;border:4px solid #e1f5da;border-radius:37px;background:linear-gradient(180deg,#f7fdee 0%,#f9fdf2 50%,#fdfefa 100%);box-shadow:0 2px 7px rgba(85,95,140,.10),0 12px 32px rgba(85,95,140,.13)"></div>
<div style="position:absolute;left:766px;top:1186px;width:113px;height:36px;background:#3f8a70;border-radius:7px"></div>
<div class="t" style="left:773.8px;top:1191.98px;font-size:24px;font-weight:700;color:#fff;letter-spacing:2.6px;transform:scaleX(0.9347);">ACTIVE</div>
<div style="position:absolute;left:1211.8px;top:1192.1px;width:36px;height:36px;background:#3f8a70;border-radius:8px"></div>
<div class="t" style="left:1215.653724604966px;top:1202.72px;font-size:17.7px;font-weight:400;color:#fff;transform:scaleX(0.9463);">iOS</div>
<svg style="position:absolute;left:1257.8px;top:1197.6px;" width="40.1" height="22.4" viewBox="0 0 40.1 22.4"><path d="M0 22.400a20.050 17.800 0 0 1 40.100 0z" fill="#3f8a70"/><path d="M10.800 7.200L7.300 1M29.300 7.200L32.800 1" stroke="#3f8a70" stroke-width="1.700" stroke-linecap="round"/><circle cx="10.900" cy="14.700" r="1.700" fill="#f8fdf0"/><circle cx="29.200" cy="14.700" r="1.700" fill="#f8fdf0"/></svg>
<svg style="position:absolute;left:975.0px;top:1214.5px;" width="124" height="130" viewBox="0 0 124 130"><rect x="3.900" y="8.400" width="110" height="110" rx="11" fill="#5a2c21"/><circle cx="58.900" cy="64" r="36.700" fill="none" stroke="#fff" stroke-width="4.400"/><g stroke="#5a2c21" stroke-width="1.100" stroke-linejoin="round"><path d="M35.0 51.3 L59.5 41.9 L69.9 45.6 L83.6 52.9 L77.9 57.0 L79.3 64.0 L79.3 82.4 L55.3 91.4 L53.1 91.4 L39.2 83.8 L39.2 74.9 L29.8 64.0 L36.4 59.8 L41.6 64.0 L37.8 54.6Z" fill="#fff" stroke="none"/><path d="M35.0 51.3 L59.5 41.9 L68.5 46.1 L44.0 56.0Z" fill="#fff"/><path d="M37.8 54.6 L44.0 56.0 L68.5 46.1 L68.0 50.8 L48.2 64.0Z" fill="#f6efed"/><path d="M48.2 64.0 L68.0 50.8 L77.0 55.5 L59.5 65.0Z" fill="#fff"/><path d="M69.9 45.6 L83.6 52.9 L77.9 57.0 L68.0 49.9Z" fill="#fff"/><path d="M59.5 65.0 L77.0 55.5 L79.3 64.0 L79.3 73.9 L55.3 82.4Z" fill="#fff"/><path d="M39.2 74.9 L53.1 82.4 L53.1 91.4 L39.2 83.8Z" fill="#fff"/><path d="M55.3 82.4 L79.3 73.7 L79.3 82.4 L55.3 91.4Z" fill="#fff"/><path d="M29.8 64.0 L36.4 59.8 L51.0 71.1 L42.5 74.9Z" fill="#fff"/><path d="M51.0 71.1 L55.3 82.4 L53.1 82.4 L42.5 74.9Z" fill="#f6efed"/></g><g opacity=".6"><circle cx="59" cy="63.600" r="54.700" fill="none" stroke="#e75d41" stroke-width="16.200"/><path d="M25.500 30.100L92.500 97.100" stroke="#e75d41" stroke-width="16.200"/></g></svg>
<div class="t" style="left:802.1278890026658px;top:1378.51px;font-size:32px;font-weight:700;color:#171a2f;letter-spacing:-0.3px;transform:scaleX(0.9361);-webkit-text-stroke:0.7px #171a2f;">Mobile OS - Ensure Device Is Not</div>
<div class="t" style="left:890.4px;top:1426.71px;font-size:32px;font-weight:700;color:#171a2f;letter-spacing:-0.3px;transform:scaleX(0.9169);-webkit-text-stroke:0.7px #171a2f;">Jailbroken or Rooted</div>
<div style="position:absolute;left:824px;top:1490px;width:250px;height:40px;background:#e9ebe8;border-radius:20px"></div>
<div class="t" style="left:839.297625096852px;top:1498.08px;font-size:24px;font-weight:400;color:#171a2f;transform:scaleX(1.0024);">device-management</div>
<div style="position:absolute;left:1087px;top:1490px;width:156.5999999999999px;height:40px;background:#e9ebe8;border-radius:20px"></div>
<div class="t" style="left:1103.5px;top:1498.08px;font-size:24px;font-weight:400;color:#171a2f;transform:scaleX(0.9927);">screen-lock</div>
<div style="position:absolute;left:1394px;top:1154px;width:600px;height:420px;box-sizing:border-box;border:4px solid #e1f5da;border-radius:37px;background:linear-gradient(180deg,#f7fdee 0%,#f9fdf2 50%,#fdfefa 100%);box-shadow:0 2px 7px rgba(85,95,140,.10),0 12px 32px rgba(85,95,140,.13)"></div>
<div style="position:absolute;left:1426px;top:1186px;width:113px;height:36px;background:#3f8a70;border-radius:7px"></div>
<div class="t" style="left:1433.8px;top:1191.98px;font-size:24px;font-weight:700;color:#fff;letter-spacing:2.6px;transform:scaleX(0.9347);">ACTIVE</div>
<div style="position:absolute;left:1920.3px;top:1192.1px;width:36px;height:36px;background:#3f8a70;border-radius:8px"></div>
<div class="t" style="left:1924.153724604966px;top:1202.72px;font-size:17.7px;font-weight:400;color:#fff;transform:scaleX(0.9463);">iOS</div>
<svg style="position:absolute;left:1635.0px;top:1214.5px;" width="118" height="123" viewBox="0 0 118 123"><defs><linearGradient id="kgd" x1="0" y1="0" x2="0" y2="1"><stop offset="0" stop-color="#222224"/><stop offset="1" stop-color="#19191b"/></linearGradient><linearGradient id="ksd" x1="0" y1="0" x2="1" y2="1"><stop offset="0" stop-color="#eef2f5"/><stop offset=".6" stop-color="#e0e8ed"/><stop offset="1" stop-color="#c3ccd3"/></linearGradient><linearGradient id="khd" x1="0" y1="0" x2="1" y2=".3"><stop offset="0" stop-color="#d3d9dd"/><stop offset=".5" stop-color="#c3cacf"/><stop offset="1" stop-color="#aab1b6"/></linearGradient></defs><rect x=".600" y="5.100" width="116.500" height="116.500" rx="27" fill="url(#kgd)" filter="url(#ash)"/><path d="M50 51.200L33.250 73.100 34.700 79.700 51.400 79 51.200 70.800 59 70.300 58.250 60.400 62 56z" fill="url(#khd)" stroke="#9aa1a6" stroke-width=".5" stroke-linejoin="round"/><path d="M53.800 57.100L35.800 77.900" stroke="#979da2" stroke-width="1.300"/><circle cx="69.100" cy="39.650" r="21.200" fill="url(#ksd)" stroke="#cfd6db" stroke-width=".6"/><circle cx="72.200" cy="35.600" r="6.300" fill="#1b1b1d" stroke="#f3f5f7" stroke-width="1.600"/><rect x="19.900" y="87.600" width="78.300" height="17" rx="2.500" fill="#44474d"/></svg>
<div class="t" style="left:1659.2px;top:1303.23px;font-size:23px;font-weight:700;color:#fff;letter-spacing:3.1px;font-family:'DejaVu Sans','Liberation Sans',sans-serif;transform:scaleX(0.9557);">*****</div>
<svg style="position:absolute;left:1444.9px;top:1377px;" width="32.5" height="31" viewBox="0 0 32.5 31"><polygon points="16.25,1.50 20.54,11.09 30.99,12.21 23.19,19.26 25.36,29.54 16.25,24.30 7.14,29.54 9.31,19.26 1.51,12.21 11.96,11.09" fill="#4561e3" stroke="#4561e3" stroke-width="2.400" stroke-linejoin="round"/></svg>
<div class="t" style="left:1490.39361007134px;top:1378.51px;font-size:32px;font-weight:700;color:#171a2f;letter-spacing:-0.3px;transform:scaleX(0.9032);-webkit-text-stroke:0.7px #171a2f;">iOS Passcode - Require Passcode</div>
<div class="t" style="left:1597.3618291271682px;top:1426.71px;font-size:32px;font-weight:700;color:#171a2f;letter-spacing:-0.3px;transform:scaleX(0.9382);-webkit-text-stroke:0.7px #171a2f;">Configuration</div>
<div style="position:absolute;left:1484px;top:1490px;width:250px;height:40px;background:#e9ebe8;border-radius:20px"></div>
<div class="t" style="left:1499.297625096852px;top:1498.08px;font-size:24px;font-weight:400;color:#171a2f;transform:scaleX(1.0024);">device-management</div>
<div style="position:absolute;left:1747px;top:1490px;width:156.5999999999999px;height:40px;background:#e9ebe8;border-radius:20px"></div>
<div class="t" style="left:1763.5px;top:1498.08px;font-size:24px;font-weight:400;color:#171a2f;transform:scaleX(0.9927);">screen-lock</div>
<div style="position:absolute;left:2054px;top:1154px;width:600px;height:420px;box-sizing:border-box;border:4px solid #e1f5da;border-radius:37px;background:linear-gradient(180deg,#f7fdee 0%,#f9fdf2 50%,#fdfefa 100%);box-shadow:0 2px 7px rgba(85,95,140,.10),0 12px 32px rgba(85,95,140,.13)"></div>
<div style="position:absolute;left:2086px;top:1186px;width:113px;height:36px;background:#3f8a70;border-radius:7px"></div>
<div class="t" style="left:2093.8px;top:1191.98px;font-size:24px;font-weight:700;color:#fff;letter-spacing:2.6px;transform:scaleX(0.9347);">ACTIVE</div>
<svg style="position:absolute;left:2577.8px;top:1197.6px;" width="40.1" height="22.4" viewBox="0 0 40.1 22.4"><path d="M0 22.400a20.050 17.800 0 0 1 40.100 0z" fill="#3f8a70"/><path d="M10.800 7.200L7.300 1M29.300 7.200L32.800 1" stroke="#3f8a70" stroke-width="1.700" stroke-linecap="round"/><circle cx="10.900" cy="14.700" r="1.700" fill="#f8fdf0"/><circle cx="29.200" cy="14.700" r="1.700" fill="#f8fdf0"/></svg>
<svg style="position:absolute;left:2295.0px;top:1214.5px;" width="118" height="123" viewBox="0 0 118 123"><defs><linearGradient id="kgb" x1="0" y1="0" x2="0" y2="1"><stop offset="0" stop-color="#5d9df1"/><stop offset="1" stop-color="#2a69e9"/></linearGradient><linearGradient id="ksb" x1="0" y1="0" x2="1" y2="1"><stop offset="0" stop-color="#eef2f5"/><stop offset=".6" stop-color="#e0e8ed"/><stop offset="1" stop-color="#c3ccd3"/></linearGradient><linearGradient id="khb" x1="0" y1="0" x2="1" y2=".3"><stop offset="0" stop-color="#d3d9dd"/><stop offset=".5" stop-color="#c3cacf"/><stop offset="1" stop-color="#aab1b6"/></linearGradient></defs><rect x=".600" y="5.100" width="116.500" height="116.500" rx="27" fill="url(#kgb)" filter="url(#ash)"/><path d="M50 51.200L33.250 73.100 34.700 79.700 51.400 79 51.200 70.800 59 70.300 58.250 60.400 62 56z" fill="url(#khb)" stroke="#9aa1a6" stroke-width=".5" stroke-linejoin="round"/><path d="M53.800 57.100L35.800 77.900" stroke="#979da2" stroke-width="1.300"/><circle cx="69.100" cy="39.650" r="21.200" fill="url(#ksb)" stroke="#cfd6db" stroke-width=".6"/><circle cx="72.200" cy="35.600" r="6.300" fill="#4f8ff0" stroke="#f3f5f7" stroke-width="1.600"/><rect x="19.900" y="87.600" width="78.300" height="17" rx="2.500" fill="#465c85"/></svg>
<div class="t" style="left:2319.2px;top:1303.23px;font-size:23px;font-weight:700;color:#fff;letter-spacing:3.1px;font-family:'DejaVu Sans','Liberation Sans',sans-serif;transform:scaleX(0.9557);">*****</div>
<svg style="position:absolute;left:2122.8px;top:1377px;" width="32.5" height="31" viewBox="0 0 32.5 31"><polygon points="16.25,1.50 20.54,11.09 30.99,12.21 23.19,19.26 25.36,29.54 16.25,24.30 7.14,29.54 9.31,19.26 1.51,12.21 11.96,11.09" fill="#4561e3" stroke="#4561e3" stroke-width="2.400" stroke-linejoin="round"/></svg>
<div class="t" style="left:2170.4px;top:1378.51px;font-size:32px;font-weight:700;color:#171a2f;letter-spacing:-0.3px;transform:scaleX(0.9156);-webkit-text-stroke:0.7px #171a2f;">Android Lock Screen - Require</div>
<div class="t" style="left:2169.1606813039934px;top:1426.71px;font-size:32px;font-weight:700;color:#171a2f;letter-spacing:-0.3px;transform:scaleX(0.9197);-webkit-text-stroke:0.7px #171a2f;">Lock Screen Configuration</div>
<div style="position:absolute;left:2144px;top:1490px;width:156.69999999999982px;height:40px;background:#e9ebe8;border-radius:20px"></div>
<div class="t" style="left:2160.3px;top:1498.08px;font-size:24px;font-weight:400;color:#171a2f;transform:scaleX(0.9975);">screen-lock</div>
<div style="position:absolute;left:2313.2px;top:1490px;width:250.4000000000001px;height:40px;background:#e9ebe8;border-radius:20px"></div>
<div class="t" style="left:2328.497625096852px;top:1498.08px;font-size:24px;font-weight:400;color:#171a2f;transform:scaleX(1.0024);">device-management</div>

</body></html>
